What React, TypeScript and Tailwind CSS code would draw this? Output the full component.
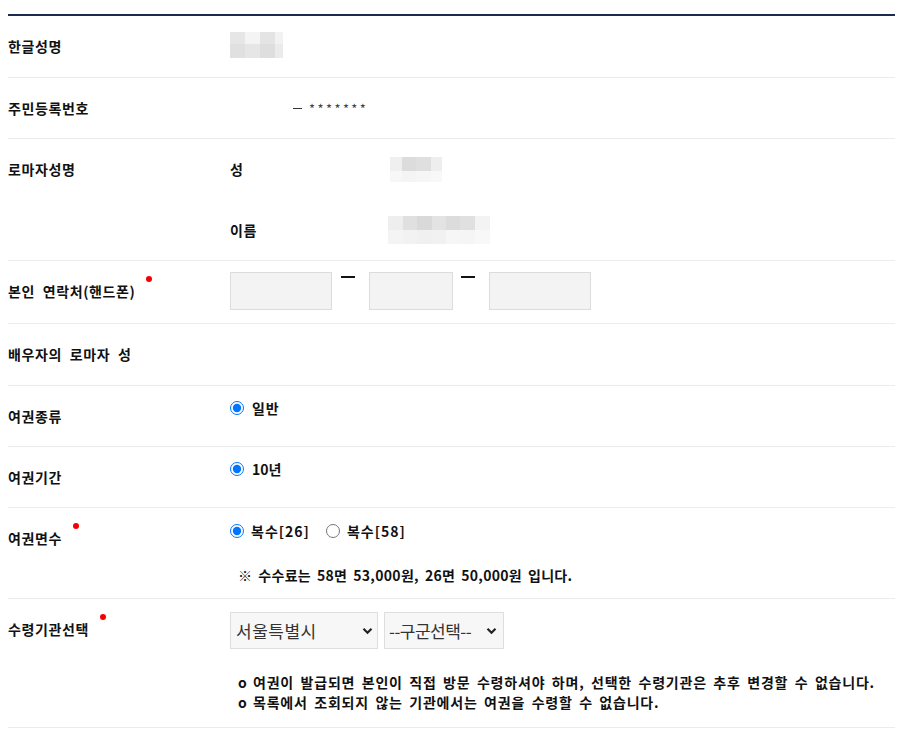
import React from "react";

const FONT = "font-['Noto_Sans_CJK_KR','Noto_Sans',sans-serif]";

type Cell = { w: string; bg: string };

function Blur({ rows }: { rows: { h: string; cells: Cell[] }[] }) {
  return (
    <div className="flex flex-col">
      {rows.map((r, i) => (
        <div key={i} className={"flex " + r.h}>
          {r.cells.map((c, j) => (
            <div key={j} className={c.w + " " + c.bg} />
          ))}
        </div>
      ))}
    </div>
  );
}

function Dot() {
  return <span className="ml-[11px] mt-[-5px] inline-block w-[6px] h-[6px] rounded-full bg-[#f50000] self-start" />;
}

function Row({
  label,
  req,
  h,
  children,
}: {
  label: string;
  req?: boolean;
  h: string;
  children?: React.ReactNode;
}) {
  return (
    <div className={"flex border-b border-[#ececec] " + h}>
      <div className="w-[222px] shrink-0 pt-[20px]">
        <div className="flex items-start">
          <span className="text-[14px] leading-[20px] font-bold text-[#111] tracking-[0.6px] [word-spacing:4px]">
            {label}
          </span>
          {req && <Dot />}
        </div>
      </div>
      <div className="flex-1 min-w-0">{children}</div>
    </div>
  );
}

function Radio({ checked, name }: { checked?: boolean; name: string }) {
  return (
    <input
      type="radio"
      name={name}
      defaultChecked={checked}
      className="m-0 w-[14px] h-[14px] shrink-0 accent-[#0075ff]"
    />
  );
}

function Chevron() {
  return (
    <svg width="11" height="8" viewBox="0 0 11 8" className="shrink-0">
      <path d="M1.5 1.8 L5.5 5.8 L9.5 1.8" fill="none" stroke="#222" strokeWidth="2.2" />
    </svg>
  );
}

export default function App() {
  return (
    <div className={"bg-white min-h-[731px] w-[900px] pt-[14px] pl-[8px] pr-[5px] text-[#111] " + FONT}>
      <div className="border-t-2 border-[#1d2b4f]">
        {/* 한글성명 */}
        <Row label="한글성명" h="h-[62px]">
          <div className="pt-[16px]">
            <Blur
              rows={[
                {
                  h: "h-[12px]",
                  cells: [
                    { w: "w-[15px]", bg: "bg-[#e6e6e6]" },
                    { w: "w-[15px]", bg: "bg-[#f4f4f4]" },
                    { w: "w-[15px]", bg: "bg-[#e4e4e4]" },
                    { w: "w-[8px]", bg: "bg-[#f2f2f2]" },
                  ],
                },
                {
                  h: "h-[14px]",
                  cells: [
                    { w: "w-[15px]", bg: "bg-[#e0e0e0]" },
                    { w: "w-[15px]", bg: "bg-[#e6e6e6]" },
                    { w: "w-[15px]", bg: "bg-[#dedede]" },
                    { w: "w-[8px]", bg: "bg-[#ebebeb]" },
                  ],
                },
              ]}
            />
          </div>
        </Row>

        {/* 주민등록번호 */}
        <Row label="주민등록번호" h="h-[61px]">
          <div className="pt-[20px] pl-[63px] flex items-center h-[40px] text-[#333]">
            <span className="inline-block w-[9px] h-[1px] bg-[#333] mr-[7px]" />
            <span className="tracking-[2.4px] text-[13px] leading-[20px] text-[#444] pt-[2px]">*******</span>
          </div>
        </Row>

        {/* 로마자성명 */}
        <Row label="로마자성명" h="h-[122px]">
          <div className="flex items-center h-[61px]">
            <span className="w-[160px] text-[14px] font-bold">성</span>
            <Blur
              rows={[
                {
                  h: "h-[14px]",
                  cells: [
                    { w: "w-[12px]", bg: "bg-[#efefef]" },
                    { w: "w-[14px]", bg: "bg-[#dcdcdc]" },
                    { w: "w-[15px]", bg: "bg-[#dfdfdf]" },
                    { w: "w-[11px]", bg: "bg-[#eeeeee]" },
                  ],
                },
                {
                  h: "h-[11px]",
                  cells: [
                    { w: "w-[12px]", bg: "bg-[#f7f7f7]" },
                    { w: "w-[14px]", bg: "bg-[#f4f4f4]" },
                    { w: "w-[15px]", bg: "bg-[#f6f6f6]" },
                    { w: "w-[11px]", bg: "bg-[#f8f8f8]" },
                  ],
                },
              ]}
            />
          </div>
          <div className="flex items-center h-[60px]">
            <span className="w-[158px] text-[14px] font-bold tracking-[0.5px]">이름</span>
            <Blur
              rows={[
                {
                  h: "h-[14px]",
                  cells: [
                    { w: "w-[15px]", bg: "bg-[#eeeeee]" },
                    { w: "w-[14px]", bg: "bg-[#e0e0e0]" },
                    { w: "w-[15px]", bg: "bg-[#d9d9d9]" },
                    { w: "w-[14px]", bg: "bg-[#e3e3e3]" },
                    { w: "w-[14px]", bg: "bg-[#dcdcdc]" },
                    { w: "w-[15px]", bg: "bg-[#e0e0e0]" },
                    { w: "w-[15px]", bg: "bg-[#f3f3f3]" },
                  ],
                },
                {
                  h: "h-[14px]",
                  cells: [
                    { w: "w-[15px]", bg: "bg-[#f4f4f4]" },
                    { w: "w-[14px]", bg: "bg-[#f2f2f2]" },
                    { w: "w-[15px]", bg: "bg-[#f0f0f0]" },
                    { w: "w-[14px]", bg: "bg-[#f1f1f1]" },
                    { w: "w-[14px]", bg: "bg-[#f6f6f6]" },
                    { w: "w-[15px]", bg: "bg-[#f5f5f5]" },
                    { w: "w-[15px]", bg: "bg-[#f8f8f8]" },
                  ],
                },
              ]}
            />
          </div>
        </Row>

        {/* 본인 연락처 */}
        <Row label="본인 연락처(핸드폰)" req h="h-[63px]">
          <div className="pt-[11px] flex items-start">
            <div className="w-[102px] h-[38px] bg-[#f3f3f3] border border-[#dcdcdc]" />
            <div className="ml-[9px] mr-[14px] mt-[4px] w-[14px] h-[2px] bg-[#111]" />
            <div className="w-[84px] h-[38px] bg-[#f3f3f3] border border-[#dcdcdc]" />
            <div className="ml-[8px] mr-[14px] mt-[4px] w-[14px] h-[2px] bg-[#111]" />
            <div className="w-[102px] h-[38px] bg-[#f3f3f3] border border-[#dcdcdc]" />
          </div>
        </Row>

        {/* 배우자의 로마자 성 */}
        <Row label="배우자의 로마자 성" h="h-[62px]" />

        {/* 여권종류 */}
        <Row label="여권종류" h="h-[61px]">
          <div className="pt-[12px] flex items-center h-[32px] leading-[20px]">
            <Radio checked name="kind" />
            <span className="ml-[8px] text-[14px] font-bold tracking-[0.8px]">일반</span>
          </div>
        </Row>

        {/* 여권기간 */}
        <Row label="여권기간" h="h-[61px]">
          <div className="pt-[12px] flex items-center h-[32px] leading-[20px]">
            <Radio checked name="period" />
            <span className="ml-[8px] text-[14px] font-bold">10년</span>
          </div>
        </Row>

        {/* 여권면수 */}
        <Row label="여권면수" req h="h-[91px]">
          <div className="pt-[13px] flex items-center h-[33px] leading-[20px]">
            <Radio checked name="pages" />
            <span className="ml-[7px] text-[14px] font-bold tracking-[1px]">복수[26]</span>
            <span className="ml-[16px] flex items-center">
              <Radio name="pages" />
            </span>
            <span className="ml-[7px] text-[14px] font-bold tracking-[1px]">복수[58]</span>
          </div>
          <div className="mt-[24px] ml-[8px] text-[14px] leading-[20px] font-bold tracking-[0.3px] [word-spacing:2.5px]">
            ※ 수수료는 58면 53,000원, 26면 50,000원 입니다.
          </div>
        </Row>

        {/* 수령기관선택 */}
        <Row label="수령기관선택" req h="h-[129px]">
          <div className="pt-[13px] flex items-start">
            <div className="w-[148px] h-[37px] bg-[#f7f7f7] border border-[#dedede] flex items-center pl-[5px] pr-[4px] justify-between">
              <span className="text-[17px] text-[#333] leading-[20px] tracking-[0.5px]">서울특별시</span>
              <Chevron />
            </div>
            <div className="ml-[6px] w-[120px] h-[37px] bg-[#f7f7f7] border border-[#dedede] flex items-center pl-[4px] pr-[6px] justify-between">
              <span className="text-[17px] text-[#333] leading-[20px] tracking-[-0.5px]">--구군선택--</span>
              <Chevron />
            </div>
          </div>
          <div className="mt-[23px] ml-[8px] text-[14px] leading-[20px] font-bold tracking-[0.8px] [word-spacing:2.5px]">
            <div className="flex">
              <span className="w-[15px] shrink-0">o</span>
              <span>여권이 발급되면 본인이 직접 방문 수령하셔야 하며, 선택한 수령기관은 추후 변경할 수 없습니다.</span>
            </div>
            <div className="flex">
              <span className="w-[15px] shrink-0">o</span>
              <span>목록에서 조회되지 않는 기관에서는 여권을 수령할 수 없습니다.</span>
            </div>
          </div>
        </Row>
      </div>
    </div>
  );
}
